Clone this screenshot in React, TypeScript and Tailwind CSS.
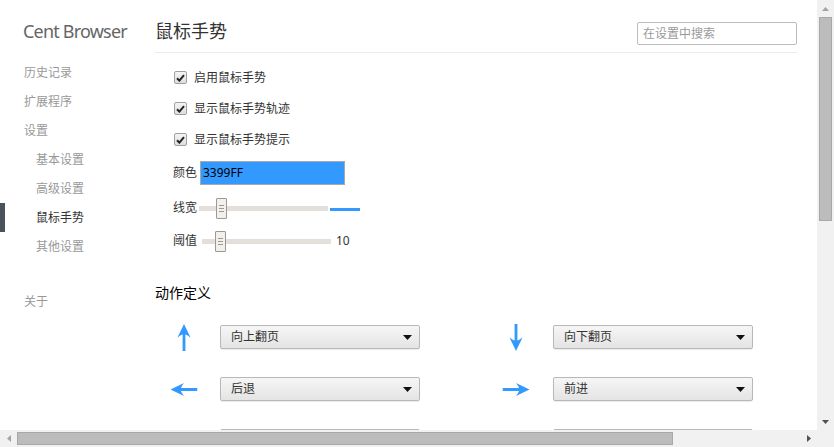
import React from 'react';

const font = { fontFamily: '"Noto Sans", "Noto Sans CJK SC", sans-serif' };

const navTop = ['历史记录', '扩展程序', '设置'];
const navSub = ['基本设置', '高级设置', '鼠标手势', '其他设置'];

function Checkbox() {
  return (
    <span className="flex h-[13px] w-[13px] items-center justify-center rounded-[2px] border border-[#a0a0a0] bg-gradient-to-b from-[#f4f4f4] to-[#dedede]">
      <svg width="9" height="8" viewBox="0 0 9 8">
        <path d="M1 4.2 L3.4 6.6 L8 1.2" fill="none" stroke="#222" strokeWidth="2" />
      </svg>
    </span>
  );
}

function Slider({ pos }: { pos: number }) {
  return (
    <div className="relative h-[5px] w-[129px] bg-[#e3dfda]">
      <div
        className="absolute top-[-8px] flex h-[21px] w-[11px] flex-col items-center justify-center gap-[2px] rounded-[1px] border border-[#9d9892] bg-[#f2f0ed]"
        style={{ left: pos }}
      >
        <span className="h-px w-[5px] bg-[#9d9892]" />
        <span className="h-px w-[5px] bg-[#9d9892]" />
        <span className="h-px w-[5px] bg-[#9d9892]" />
      </div>
    </div>
  );
}

function Arrow({ dir }: { dir: string }) {
  const rot =
    dir === 'up' ? '' :
    dir === 'down' ? 'rotate-180' :
    dir === 'left' ? '-rotate-90' :
    dir === 'right' ? 'rotate-90' :
    dir === 'upleft' ? '-rotate-45' : 'rotate-45';
  return (
    <div className="flex h-[28px] w-[28px] items-center justify-center">
      <svg width="14" height="27" viewBox="0 0 14 27" className={rot}>
        <path d="M7 0 L13.5 13.5 Q9.5 10.6 8.4 10.6 L8.4 27 L5.6 27 L5.6 10.6 Q4.5 10.6 0.5 13.5 Z" fill="#3399ff" />
      </svg>
    </div>
  );
}

function Select({ label }: { label: string }) {
  return (
    <div className="flex h-[24px] w-[200px] items-center justify-between rounded-[2px] border border-[#b8b8b8] bg-gradient-to-b from-[#f6f6f6] to-[#e4e4e4] pl-[10px] pr-[7px] text-[12px] text-[#333] shadow-[0_1px_1px_rgba(0,0,0,0.08)]">
      <span>{label}</span>
      <svg width="9" height="5" viewBox="0 0 9 5">
        <path d="M0 0 L9 0 L4.5 5 Z" fill="#111" />
      </svg>
    </div>
  );
}

const actions: [string, string, string, string][] = [
  ['up', '向上翻页', 'down', '向下翻页'],
  ['left', '后退', 'right', '前进'],
  ['upleft', '', 'upright', ''],
];

export default function App() {
  return (
    <div className="flex h-[447px] w-[834px] flex-col overflow-hidden bg-white" style={font}>
      <div className="flex min-h-0 flex-1">
        <div className="flex min-w-0 flex-1 overflow-hidden">
          {/* Sidebar */}
          <div className="w-[155px] shrink-0">
            <div className="pl-[23px] pt-[18px] text-[18px] leading-[26px] tracking-[-0.8px] text-[#666]">Cent Browser</div>
            <div className="mt-[14px] text-[12px]">
              {navTop.map((t) => (
                <div key={t} className="flex h-[29px] items-center pl-[24px] text-[#999]">{t}</div>
              ))}
              {navSub.map((t) =>
                t === '鼠标手势' ? (
                  <div key={t} className="flex h-[29px] items-center border-l-[5px] border-[#4b525c] pl-[31px] text-[#333]">{t}</div>
                ) : (
                  <div key={t} className="flex h-[29px] items-center pl-[36px] text-[#999]">{t}</div>
                )
              )}
              <div className="mt-[26px] flex h-[29px] items-center pl-[24px] text-[#999]">关于</div>
            </div>
          </div>

          {/* Main */}
          <div className="w-[642px] shrink-0">
            <div className="flex h-[53px] items-start justify-between border-b border-[#ebebeb]">
              <div className="pt-[18px] text-[18px] leading-[26px] text-[#333]">鼠标手势</div>
              <div className="mt-[22px] flex h-[23px] w-[160px] items-center rounded-[2px] border border-[#bdbdbd] px-[5px] text-[12px] text-[#9a9a9a]">
                在设置中搜索
              </div>
            </div>

            <div className="pt-[9px] text-[12px] text-[#333]">
              {['启用鼠标手势', '显示鼠标手势轨迹', '显示鼠标手势提示'].map((t) => (
                <div key={t} className="flex h-[31px] items-center gap-[7px] pl-[19px]">
                  <Checkbox />
                  <span>{t}</span>
                </div>
              ))}

              <div className="mt-[6px] flex h-[24px] items-center pl-[18px]">
                <span className="w-[27px]">颜色</span>
                <div className="flex h-[24px] w-[145px] items-center border border-[#a9a9a9] bg-[#3399ff] pl-[2px] text-black">3399FF</div>
              </div>

              <div className="mt-[11px] flex h-[24px] items-center pl-[18px]">
                <span className="w-[26px]">线宽</span>
                <Slider pos={17} />
                <span className="ml-[2px] mt-[2px] h-[3px] w-[30px] bg-[#3399ff]" />
              </div>

              <div className="mt-[9px] flex h-[24px] items-center pl-[18px]">
                <span className="w-[29px]">阈值</span>
                <Slider pos={13} />
                <span className="ml-[5px]">10</span>
              </div>

              <div className="mt-[30px] text-[14px] leading-[20px] text-black">动作定义</div>

              <div className="mt-[22px] flex flex-col gap-[28px] pl-[15px]">
                {actions.map(([d1, l1, d2, l2]) => (
                  <div key={d1} className="flex h-[24px] items-center">
                    <div className="flex w-[332px] items-center gap-[22px]">
                      <Arrow dir={d1} />
                      <Select label={l1} />
                    </div>
                    <div className="flex items-center gap-[23px]">
                      <Arrow dir={d2} />
                      <Select label={l2} />
                    </div>
                  </div>
                ))}
              </div>
            </div>
          </div>
        </div>

        {/* Vertical scrollbar */}
        <div className="flex w-[17px] shrink-0 flex-col bg-[#f1f1f1]">
          <div className="flex h-[17px] items-center justify-center">
            <svg width="7" height="4" viewBox="0 0 7 4"><path d="M0 4 L3.5 0 L7 4 Z" fill="#a3a3a3" /></svg>
          </div>
          <div className="flex-1 px-[2px]">
            <div className="h-[204px] border border-[#a8a8a8] bg-[#bcbcbc]" />
          </div>
          <div className="flex h-[17px] items-center justify-center">
            <svg width="7" height="4" viewBox="0 0 7 4"><path d="M0 0 L7 0 L3.5 4 Z" fill="#505050" /></svg>
          </div>
        </div>
      </div>

      {/* Horizontal scrollbar */}
      <div className="flex h-[17px] shrink-0 bg-[#f1f1f1]">
        <div className="flex w-[17px] items-center justify-center">
          <svg width="4" height="7" viewBox="0 0 4 7"><path d="M4 0 L0 3.5 L4 7 Z" fill="#a3a3a3" /></svg>
        </div>
        <div className="flex flex-1 items-center">
          <div className="h-[13px] w-[656px] border border-[#a8a8a8] bg-[#bcbcbc]" />
        </div>
        <div className="flex w-[17px] items-center justify-center">
          <svg width="4" height="7" viewBox="0 0 4 7"><path d="M0 0 L4 3.5 L0 7 Z" fill="#505050" /></svg>
        </div>
        <div className="w-[17px]" />
      </div>
    </div>
  );
}
